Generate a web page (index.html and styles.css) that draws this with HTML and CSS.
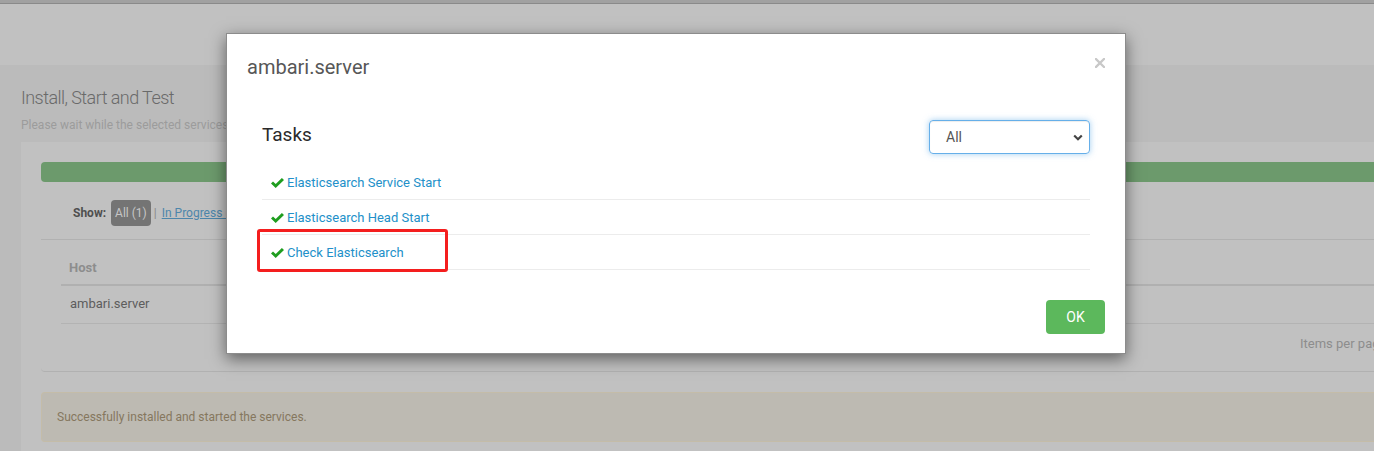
FILE: index.html
```html
<!DOCTYPE html>
<html lang="en">
<head>
<meta charset="utf-8">
<title>Install, Start and Test</title>
<link rel="stylesheet" href="styles.css">
</head>
<body>
<div class="topbar"></div>
<div class="navbar"></div>
<main class="main">
  <h2 class="title">Install, Start and Test</h2>
  <p class="subtitle">Please wait while the selected services are installed and started.</p>
  <section class="panel">
    <div class="progress"></div>
    <div class="filter-row">
      <span class="show-label">Show:</span>
      <span class="badge">All (1)</span>
      <span class="sep">|</span>
      <a class="filter-link">In Progress (0)</a>
    </div>
    <div class="tasks-box">
      <div class="table">
        <div class="thead"><span class="th">Host</span></div>
        <div class="trow"><span class="td">ambari.server</span></div>
      </div>
      <div class="pager">Items per page: 10</div>
    </div>
    <div class="alert">Successfully installed and started the services.</div>
  </section>
</main>

<div class="modal">
  <div class="modal-header">
    <h4 class="modal-title">ambari.server</h4>
    <button class="close" aria-label="Close">
      <svg width="10" height="10" viewBox="0 0 10 10"><path d="M1 1 L9 9 M9 1 L1 9" stroke="#c8c8c8" stroke-width="2.3" stroke-linecap="square"/></svg>
    </button>
  </div>
  <div class="modal-body">
    <div class="tasks-head">
      <h4 class="tasks-title">Tasks</h4>
      <div class="select" role="listbox">
        <span>All</span>
        <svg width="10" height="7" viewBox="0 0 10 7"><path d="M1.2 1.5 L5 5.2 L8.8 1.5" fill="none" stroke="#444" stroke-width="2.2"/></svg>
      </div>
    </div>
    <ul class="task-list">
      <li class="task"><svg class="check" width="13" height="10" viewBox="0 0 13 10"><path d="M0 5.4 L2 3.4 L4.7 6.1 L10.9 0 L13 2 L4.7 10 Z" fill="#1f9d1f"/></svg><a class="task-link">Elasticsearch Service Start</a></li>
      <li class="task"><svg class="check" width="13" height="10" viewBox="0 0 13 10"><path d="M0 5.4 L2 3.4 L4.7 6.1 L10.9 0 L13 2 L4.7 10 Z" fill="#1f9d1f"/></svg><a class="task-link">Elasticsearch Head Start</a></li>
      <li class="task"><svg class="check" width="13" height="10" viewBox="0 0 13 10"><path d="M0 5.4 L2 3.4 L4.7 6.1 L10.9 0 L13 2 L4.7 10 Z" fill="#1f9d1f"/></svg><a class="task-link">Check Elasticsearch</a></li>
    </ul>
  </div>
  <div class="modal-footer">
    <button class="btn-ok">OK</button>
  </div>
  <div class="highlight"></div>
</div>
</body>
</html>
```

FILE: styles.css
```css
* { box-sizing: border-box; }
html, body { margin: 0; padding: 0; }
body {
  background: #bbbbbb;
  font-family: Roboto, "Liberation Sans", sans-serif;
  width: 1374px;
  height: 451px;
  overflow: hidden;
  position: relative;
}
.topbar {
  height: 4px;
  background: #a1a1a1;
  border-bottom: 1px solid #8a8a8a;
}
.navbar {
  height: 61px;
  background: #c1c1c1;
}
.main {
  padding: 21px 0 0 21px;
}
.title {
  margin: 0;
  font-size: 18px;
  line-height: 24px;
  font-weight: 300;
  letter-spacing: -0.55px;
  color: #6a6a6a;
}
.subtitle {
  margin: 7px 0 0;
  font-size: 12px;
  line-height: 16px;
  color: #9c9c9c;
  white-space: nowrap;
}
.panel {
  margin-top: 9px;
  background: #c1c1c1;
  padding: 20px 0 20px 20px;
  height: 400px;
}
.progress {
  height: 20px;
  background: #6c9a6c;
  border-radius: 4px 0 0 4px;
}
.filter-row {
  margin-top: 18px;
  padding-left: 32px;
  height: 26px;
  display: flex;
  align-items: center;
  font-size: 12px;
}
.show-label {
  font-weight: 700;
  color: #4f4f4f;
}
.badge {
  margin-left: 5px;
  height: 26px;
  line-height: 26px;
  padding: 0 4px;
  border-radius: 4px;
  background: #747474;
  color: #c6c6c6;
}
.sep {
  margin: 0 5px 0 3px;
  color: #8a8a8a;
}
.filter-link {
  color: #4d86ab;
  text-decoration: underline;
}
.tasks-box {
  margin-top: 13px;
  border-top: 1px solid #b1b1b1;
  border-bottom: 1px solid #b1b1b1;
  border-radius: 0 0 0 4px;
}
.table {
  margin-left: 20px;
}
.thead {
  height: 46px;
  border-bottom: 2px solid #b0b0b0;
  padding: 19px 0 0 8px;
  font-size: 13px;
  line-height: 18px;
}
.th {
  font-weight: 700;
  color: #8d8d8d;
}
.trow {
  height: 38px;
  border-bottom: 1px solid #b3b3b3;
  padding: 8px 0 0 9px;
  font-size: 13px;
  line-height: 20px;
  color: #5d5d5d;
}
.pager {
  height: 47px;
  padding: 11px 0 0 1259px;
  font-size: 13px;
  line-height: 18px;
  color: #8d8d8d;
  white-space: nowrap;
}
.alert {
  margin-top: 20px;
  height: 50px;
  background: #bdbab2;
  border: 1px solid #c4bca8;
  border-right: none;
  border-radius: 4px 0 0 4px;
  padding: 0 0 0 15px;
  font-size: 12px;
  line-height: 48px;
  color: #85775e;
}

/* modal */
.modal {
  position: absolute;
  left: 226px;
  top: 33px;
  width: 900px;
  height: 321px;
  background: #fff;
  border: 1px solid rgba(0, 0, 0, 0.45);
  box-shadow: 0 5px 15px rgba(0, 0, 0, 0.5);
}
.modal-header {
  display: flex;
  justify-content: space-between;
  align-items: flex-start;
  padding: 22px 20px 0 20px;
}
.modal-title {
  margin: 0;
  font-size: 20px;
  line-height: 22px;
  font-weight: 400;
  color: #575757;
}
.close {
  margin-top: 2px;
  padding: 0;
  border: 0;
  background: none;
  width: 10px;
  height: 10px;
  display: block;
}
.close svg { display: block; }
.modal-body {
  padding: 42px 35px 0;
}
.tasks-head {
  display: flex;
  justify-content: space-between;
  align-items: flex-start;
  height: 34px;
  margin-bottom: 11px;
}
.tasks-title {
  margin: 4px 0 0;
  font-size: 19px;
  line-height: 22px;
  font-weight: 400;
  color: #2a2a2a;
}
.select {
  width: 161px;
  height: 34px;
  border: 1px solid #66afe9;
  border-radius: 4px;
  box-shadow: inset 0 1px 1px rgba(0, 0, 0, 0.075), 0 0 6px rgba(102, 175, 233, 0.6);
  display: flex;
  align-items: center;
  justify-content: space-between;
  padding: 0 6px 0 16px;
  font-size: 14px;
  color: #555;
}
.select svg { display: block; margin-top: 1px; }
.task-list {
  list-style: none;
  margin: 0;
  padding: 0;
}
.task {
  height: 35px;
  border-bottom: 1px solid #ececec;
  padding: 1px 0 0 9px;
  display: flex;
  align-items: center;
  font-size: 13px;
  line-height: 33px;
}
.check {
  display: block;
  margin-right: 3px;
  flex: none;
}
.task-link {
  color: #2290c9;
  text-decoration: none;
}
.modal-footer {
  display: flex;
  justify-content: flex-end;
  padding: 30px 20px 0;
}
.btn-ok {
  width: 59px;
  height: 34px;
  border: 0;
  border-radius: 4px;
  background: #5cb85c;
  color: #fff;
  font-family: Roboto, "Liberation Sans", sans-serif;
  font-size: 14px;
  padding: 0;
}
.highlight {
  position: absolute;
  left: 30px;
  top: 195px;
  width: 191px;
  height: 43px;
  border: 3px solid #f41e1e;
  border-radius: 3px;
}
```
